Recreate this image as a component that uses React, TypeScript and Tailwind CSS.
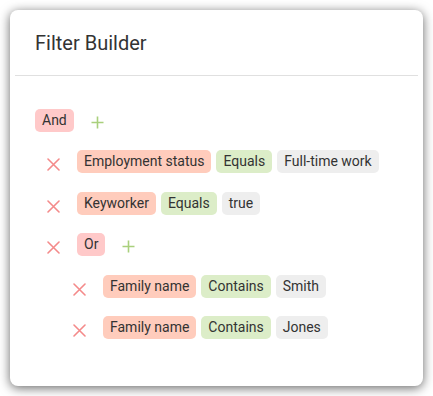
import React from "react";

type Tone = "group" | "field" | "op" | "value";

const toneClass: Record<Tone, string> = {
  group: "bg-[#ffc9c9]",
  field: "bg-[#ffccbc]",
  op: "bg-[#dcedc8]",
  value: "bg-[#eeeeee]",
};

function Chip({ tone, children }: { tone: Tone; children: React.ReactNode }) {
  return (
    <span
      className={`${toneClass[tone]} h-[23px] px-[7px] pb-[1px] rounded-[5px] flex items-center text-[14px] leading-none text-[#333] whitespace-nowrap`}
    >
      {children}
    </span>
  );
}

function RemoveIcon() {
  return (
    <svg width="13" height="13" viewBox="0 0 13 13" className="mt-[8px] shrink-0">
      <path d="M1 1L12 12M12 1L1 12" stroke="#f48a8a" strokeWidth="1.6" strokeLinecap="round" />
    </svg>
  );
}

function AddIcon() {
  return (
    <svg width="13" height="13" viewBox="0 0 13 13" className="mt-[7px] shrink-0">
      <path d="M6.5 0.5V12.5M0.5 6.5H12.5" stroke="#a9d07c" strokeWidth="1.6" />
    </svg>
  );
}

type Row =
  | { kind: "group"; level: number; label: string }
  | { kind: "cond"; level: number; field: string; op: string; value: string };

const rows: Row[] = [
  { kind: "group", level: 0, label: "And" },
  { kind: "cond", level: 1, field: "Employment status", op: "Equals", value: "Full-time work" },
  { kind: "cond", level: 1, field: "Keyworker", op: "Equals", value: "true" },
  { kind: "group", level: 1, label: "Or" },
  { kind: "cond", level: 2, field: "Family name", op: "Contains", value: "Smith" },
  { kind: "cond", level: 2, field: "Family name", op: "Contains", value: "Jones" },
];

export default function App() {
  return (
    <div className="w-[433px] h-[396px] p-[10px] bg-white" style={{ fontFamily: "Roboto, 'Liberation Sans', sans-serif" }}>
      <div className="w-[413px] h-[376px] bg-white rounded-[8px] shadow-[0_2px_11px_rgba(0,0,0,0.6)]">
        <div className="h-[65px] px-[25px] flex items-center">
          <h1 className="text-[20px] text-[#333] font-normal">Filter Builder</h1>
        </div>
        <div className="mx-[5px] h-px bg-[#e0e0e0]" />
        <div className="pl-[25px] pt-[33px] flex flex-col gap-[18.4px]">
          {rows.map((r, i) => (
            <div key={i} className="flex items-start" style={{ paddingLeft: r.level === 0 ? 0 : 12 + (r.level - 1) * 26 }}>
              {r.level > 0 && (
                <div className="w-[30px] shrink-0">
                  <RemoveIcon />
                </div>
              )}
              {r.kind === "group" ? (
                <div className="flex items-start gap-[17px]">
                  <Chip tone="group">{r.label}</Chip>
                  <AddIcon />
                </div>
              ) : (
                <div className="flex items-start gap-[5px]">
                  <Chip tone="field">{r.field}</Chip>
                  <Chip tone="op">{r.op}</Chip>
                  <Chip tone="value">{r.value}</Chip>
                </div>
              )}
            </div>
          ))}
        </div>
      </div>
    </div>
  );
}
